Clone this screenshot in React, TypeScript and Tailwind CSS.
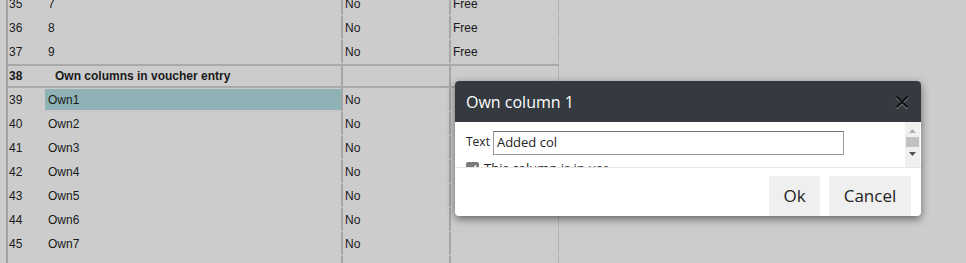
import React from 'react';

type Row = { no: number; name: string; used?: string; status?: string; header?: boolean; selected?: boolean };

const rows: Row[] = [
  { no: 35, name: '7', used: 'No', status: 'Free' },
  { no: 36, name: '8', used: 'No', status: 'Free' },
  { no: 37, name: '9', used: 'No', status: 'Free' },
  { no: 38, name: 'Own columns in voucher entry', header: true },
  { no: 39, name: 'Own1', used: 'No', selected: true },
  { no: 40, name: 'Own2', used: 'No' },
  { no: 41, name: 'Own3', used: 'No' },
  { no: 42, name: 'Own4', used: 'No' },
  { no: 43, name: 'Own5', used: 'No' },
  { no: 44, name: 'Own6', used: 'No' },
  { no: 45, name: 'Own7', used: 'No' },
  { no: 46, name: '', used: '' },
];

const GridRow: React.FC<{ row: Row }> = ({ row }) => {
  const bold = row.header ? 'font-bold' : '';
  return (
    <div
      className={`flex h-6 items-stretch ${
        row.header ? 'border-y-2 border-[#a9a9a9]' : 'border-b border-[#c8c8c8]'
      }`}
    >
      <div className={`w-[36px] pl-[1px] flex items-center ${bold}`}>{row.no}</div>
      <div className="w-[297px] flex items-stretch py-[1px] pl-[1px]">
        <div
          className={`flex-1 flex items-center ${row.header ? 'pl-[10px] font-bold' : 'pl-[3px]'} ${
            row.selected ? 'bg-[#8fb2b7]' : ''
          }`}
        >
          {row.name}
        </div>
      </div>
      <div className="w-[108px] border-l-2 border-[#a6a6a6] pl-[2px] flex items-center">{row.used}</div>
      <div className="w-[110px] border-l-2 border-r border-l-[#a6a6a6] border-r-[#b3b3b3] pl-[2px] flex items-center">
        {row.status}
      </div>
    </div>
  );
};

export default function App() {
  return (
    <div className="relative w-[966px] h-[263px] overflow-hidden bg-[#cccccc] text-[12px] text-[#1a1a1a] font-['Liberation_Sans',Arial,sans-serif]">
      <div className="ml-[6px] -mt-2 w-[553px] border-l-2 border-[#a2a2a2]">
        {rows.map((r) => (
          <GridRow key={r.no} row={r} />
        ))}
      </div>

      {/* Modal dialog */}
      <div className="absolute left-[455px] top-[81px] w-[466px] h-[135px] bg-white rounded-[4px] overflow-hidden shadow-[0_3px_9px_rgba(0,0,0,0.5)] flex flex-col font-['Open_Sans',sans-serif]">
        <div className="h-[41px] shrink-0 bg-[#353a40] flex items-center justify-between pl-[11px] pr-[11px]">
          <span className="text-white text-[16px]">Own column 1</span>
          <svg
            width="14"
            height="14"
            viewBox="0 0 14 14"
            className="mr-[1px] [filter:drop-shadow(0_1px_0_#8a8a8a)]"
          >
            <path d="M1.5 1.5 L12.5 12.5 M12.5 1.5 L1.5 12.5" stroke="#15171a" strokeWidth="2.4" />
          </svg>
        </div>
        <div className="h-[46px] shrink-0 flex border-b border-[#e5e5e5]">
          <div className="flex-1 overflow-hidden pl-[11px] pt-[9px]">
            <div className="flex items-center gap-[3px] text-[#222]">
              <span className="-mt-[2px] text-[12px]">Text</span>
              <div className="w-[351px] h-[24px] border border-[#999] border-t-[#777] flex items-center pl-[3px] text-[13px]">
                Added col
              </div>
            </div>
            <div className="flex items-center gap-[5px] mt-[4px] text-[13px] text-[#222]">
              <span className="w-[13px] h-[13px] rounded-[2px] bg-[#7a7a7a] flex items-center justify-center">
                <svg width="9" height="9" viewBox="0 0 9 9">
                  <path d="M1 5 L3.5 7.5 L8 1.5" stroke="#fff" strokeWidth="1.6" fill="none" />
                </svg>
              </span>
              <span>This column is in use</span>
            </div>
          </div>
          <div className="w-[15px] mr-[1px] bg-[#f0f0f0] flex flex-col items-center pt-[7px]">
            <svg width="7" height="4" viewBox="0 0 7 4">
              <path d="M0 4 L3.5 0 L7 4 Z" fill="#b0b0b0" />
            </svg>
            <div className="w-[13px] h-[10px] bg-[#c1c1c1] mt-[4px]" />
            <svg width="7" height="4" viewBox="0 0 7 4" className="mt-[5px]">
              <path d="M0 0 L7 0 L3.5 4 Z" fill="#505050" />
            </svg>
          </div>
        </div>
        <div className="flex-1 flex justify-end items-end gap-[9px] pr-[10px]">
          <button className="w-[51px] h-[40px] bg-[#efefef] rounded-[3px] text-[17px] text-[#222]">Ok</button>
          <button className="w-[82px] h-[40px] bg-[#efefef] rounded-[3px] text-[17px] text-[#222]">Cancel</button>
        </div>
      </div>
    </div>
  );
}
